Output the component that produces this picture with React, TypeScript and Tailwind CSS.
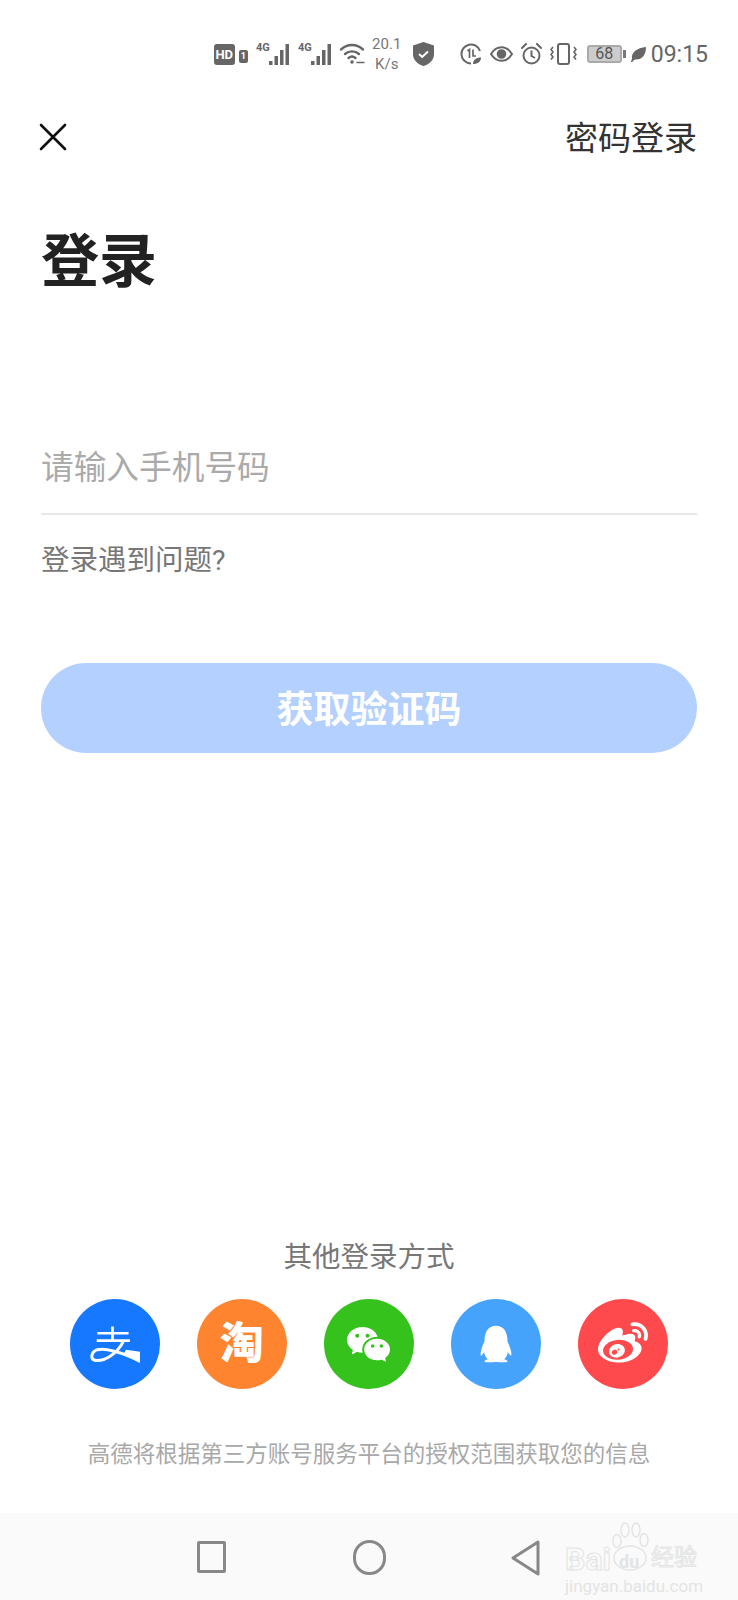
import React from 'react';
import { FaWeibo, FaQq } from 'react-icons/fa';
import { RiWechatFill } from 'react-icons/ri';

const font = 'font-["Roboto","Noto_Sans_CJK_SC",sans-serif]';

// signal bars with the small 4G mark
const Signal = () => (
  <svg width="36" height="26" viewBox="0 0 36 26" className="text-[#666]">
    <text x="0" y="10" fontSize="11" fontWeight="700" fill="currentColor" fontFamily="Roboto, sans-serif">4G</text>
    <rect x="13" y="20" width="3.500" height="4" fill="currentColor" />
    <rect x="18.500" y="15" width="3.500" height="9" fill="currentColor" />
    <rect x="24" y="9" width="3.500" height="15" fill="currentColor" />
    <rect x="29.500" y="3" width="3.500" height="21" fill="currentColor" />
  </svg>
);

const StatusBar = () => (
  <div className="h-[108px] flex items-center justify-end pr-[30px] text-[#666]">
    <div className="w-[21px] h-[21px] rounded-[3px] bg-[#666] text-white text-[13px] font-bold flex items-center justify-center leading-none">HD</div>
    <div className="ml-[4px] mt-[4px] w-[9px] h-[13px] rounded-[2px] bg-[#666] text-white text-[9px] font-bold flex items-center justify-center leading-none">1</div>
    <div className="ml-[8px]"><Signal /></div>
    <div className="ml-[6px]"><Signal /></div>
    <svg className="ml-[5px]" width="26" height="24" viewBox="0 0 26 24" fill="none" stroke="currentColor" strokeWidth="2.400" strokeLinecap="round">
      <path d="M2 7.500C8.500 1.500 17.500 1.500 24 7.500" />
      <path d="M6 12c4-3.500 10-3.500 14 0" />
      <path d="M9.500 16c2-1.600 5-1.600 7 0" />
      <circle cx="13" cy="20" r="1.800" fill="currentColor" stroke="none" />
      <path d="M18 20.500h7" strokeWidth="1.400" />
    </svg>
    <div className="ml-[6px] w-[32px] text-center text-[15px] leading-[20px] text-[#777]">
      <div>20.1</div>
      <div>K/s</div>
    </div>
    <svg className="ml-[10px]" width="21" height="24" viewBox="0 0 21 24">
      <path d="M10.500 0L21 3.500V12c0 6-4.500 10-10.500 12C4.500 22 0 18 0 12V3.500z" fill="#666" />
      <path d="M6 12l3.200 3 5.800-5.500" fill="none" stroke="#fff" strokeWidth="2" />
    </svg>
    <svg className="ml-[26px]" width="22" height="22" viewBox="0 0 22 22" fill="none" stroke="currentColor" strokeWidth="2">
      <path d="M20 8A9.500 9.500 0 1 0 11 20.500" />
      <path d="M7.500 8l2-1.500V15M13 6.500V13h3" strokeWidth="1.700" />
      <path d="M13 21c0-4 3-6.500 8-6.500 0 4-3 6.500-8 6.500z" fill="currentColor" stroke="none" />
    </svg>
    <svg className="ml-[8px]" width="23" height="16" viewBox="0 0 23 16" fill="none" stroke="currentColor" strokeWidth="2">
      <path d="M1 8c5.500-9 15.500-9 21 0-5.500 9-15.500 9-21 0z" />
      <circle cx="11.500" cy="8" r="3.800" fill="currentColor" />
    </svg>
    <svg className="ml-[8px]" width="21" height="22" viewBox="0 0 21 22" fill="none" stroke="currentColor" strokeWidth="2">
      <circle cx="10.500" cy="12.500" r="8" />
      <path d="M10.500 7.500v5.500l3.500 2" />
      <path d="M1 5l4-4M20 5l-4-4" strokeLinecap="round" />
    </svg>
    <svg className="ml-[8px]" width="27" height="22" viewBox="0 0 27 22" fill="none" stroke="currentColor" strokeWidth="2">
      <rect x="8" y="1" width="11" height="20" rx="2" />
      <path d="M3 4l-2 2.500 2 2.500-2 2.500 2 2.500-2 2.500M24 4l2 2.500-2 2.500 2 2.500-2 2.500 2 2.500" strokeWidth="1.600" />
    </svg>
    <div className="ml-[10px] w-[35px] h-[18px] rounded-[3px] border-2 border-[#aaa] bg-[#ccc] text-[16px] leading-none text-[#555] flex items-center justify-center">68</div>
    <div className="ml-[1px] w-[3px] h-[8px] bg-[#777]" />
    <svg className="ml-[5px]" width="15" height="15" viewBox="0 0 15 15">
      <path d="M0 15c0-1 .5-2 1-3C0 5 6 1 15 0c0 8-4 13-11 12.500-1 .6-2 1.500-2.800 2.500z" fill="#666" />
    </svg>
    <span className="ml-[5px] text-[23px] leading-none text-[#666]">09:15</span>
  </div>
);

const AlipayMark = () => (
  <svg width="52" height="39" viewBox="120 130 155 115" fill="none" stroke="#fff" strokeWidth="8">
    <path d="M145 154h93M143 176h99M190 134v42" />
    <path d="M222 178C205 215 165 238 140 235 123 232 125 210 145 203 170 196 210 210 245 224" strokeWidth="9" />
    <path d="M272 209v34l-50-24 8-16z" fill="#fff" stroke="none" />
  </svg>
);

const socials = [
  { key: 'alipay', bg: 'bg-[#1677ff]', icon: <AlipayMark /> },
  { key: 'taobao', bg: 'bg-[#ff8430]', icon: <span className="text-[44px] font-black text-white leading-none">淘</span> },
  { key: 'wechat', bg: 'bg-[#36c21c]', icon: <RiWechatFill className="w-[47px] h-[47px] text-white" /> },
  { key: 'qq', bg: 'bg-[#46a3fc]', icon: <FaQq className="w-[32px] h-[40px] text-white" /> },
  { key: 'weibo', bg: 'bg-[#fe4a4c]', icon: <FaWeibo className="w-[50px] h-[50px] text-white" /> },
];

export default function App() {
  return (
    <div className={`relative w-[738px] h-[1600px] bg-white flex flex-col overflow-hidden ${font}`}>
      <StatusBar />

      {/* Header */}
      <div className="h-[58px] flex items-center justify-between pl-[39px] pr-[41px]">
        <svg width="28" height="28" viewBox="0 0 28 28" stroke="#111" strokeWidth="2.600" strokeLinecap="round">
          <path d="M2 2l24 24M26 2L2 26" />
        </svg>
        <span className="pt-[3px] text-[33px] leading-none text-[#333]">密码登录</span>
      </div>

      <div className="px-[41px] flex flex-col">
        <h1 className="mt-[56px] h-[80px] flex items-center text-[58px] font-bold text-[#222] leading-none">登录</h1>

        <div className="mt-[126px] h-[87px] pb-[4px] border-b-2 border-[#e8e8e8] flex items-center text-[32.700px] text-[#aaa] leading-none">
          请输入手机号码
        </div>

        <div className="mt-[26px] h-[40px] flex items-center text-[28.500px] text-[#777] leading-none">登录遇到问题?</div>

        <button className="mt-[82px] h-[90px] rounded-[45px] bg-[#b3d0ff] text-white text-[37px] font-bold leading-none pt-[5px]">
          获取验证码
        </button>
      </div>

      <div className="flex-1" />

      <div className="h-[40px] flex items-center justify-center text-[28.500px] text-[#777] leading-none">其他登录方式</div>

      <div className="mt-[21px] pl-[69.500px] flex gap-[37.200px]">
        {socials.map(s => (
          <div key={s.key} className={`w-[90px] h-[90px] rounded-full flex items-center justify-center ${s.bg}`}>
            {s.icon}
          </div>
        ))}
      </div>

      <div className="mt-[49px] h-[32px] flex items-center justify-center text-[22.500px] text-[#a8a8a8] leading-none">
        高德将根据第三方账号服务平台的授权范围获取您的信息
      </div>

      {/* Nav bar */}
      <div className="mt-[43px] h-[87px] bg-[#fafafa] flex items-start pt-[28px] pl-[197px]">
        <div className="w-[29px] h-[32px] rounded-[2px] border-[3px] border-[#888]" />
        <div className="ml-[127px] w-[33px] h-[35px] -mt-[1px] rounded-full border-[3px] border-[#888]" />
        <svg className="ml-[125px] -mt-[1px]" width="30" height="36" viewBox="0 0 30 36" fill="none" stroke="#888" strokeWidth="3" strokeLinejoin="round">
          <path d="M27 2v32L2 18z" />
        </svg>
      </div>

      {/* Baidu watermark */}
      <div className="absolute left-[565px] top-[1522px] w-[135px] h-[74px] text-[#e4e4e4]">
        <svg className="absolute left-[45px] top-0" width="40" height="50" viewBox="0 0 40 50" fill="none" stroke="currentColor" strokeWidth="1.500">
          <ellipse cx="7" cy="19" rx="4" ry="6.500" />
          <ellipse cx="15" cy="8" rx="4" ry="7" />
          <ellipse cx="26" cy="8" rx="4" ry="7" />
          <ellipse cx="34" cy="18" rx="4" ry="6.500" />
          <ellipse cx="20" cy="36" rx="16" ry="12" />
        </svg>
        <span className="absolute left-0 top-[21px] text-[32px] leading-none font-bold text-transparent [-webkit-text-stroke:1px_#e4e4e4]">Bai</span>
        <span className="absolute left-[54px] top-[31px] text-[18px] leading-none font-bold">du</span>
        <span className="absolute left-[86px] top-[24px] text-[23px] leading-none text-transparent [-webkit-text-stroke:1px_#e4e4e4]">经验</span>
        <span className="absolute left-0 top-[56px] text-[17px] leading-none">jingyan.baidu.com</span>
      </div>
    </div>
  );
}
